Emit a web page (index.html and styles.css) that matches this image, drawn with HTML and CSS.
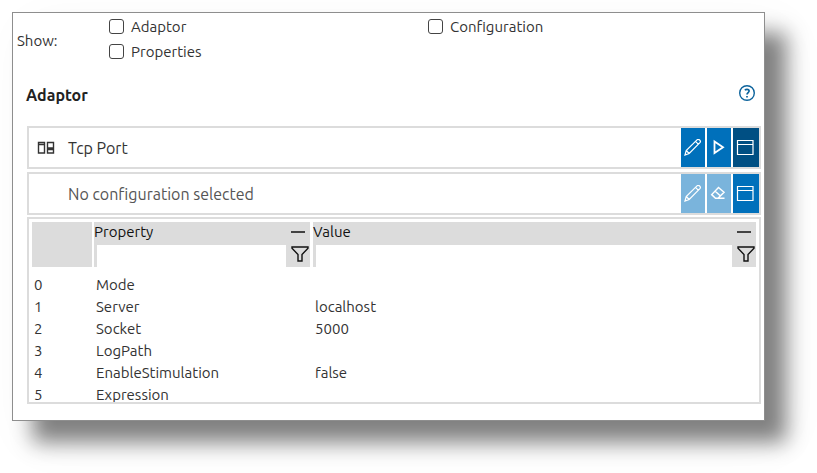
FILE: index.html
```html
<!DOCTYPE html>
<html lang="en">
<head>
<meta charset="utf-8">
<title>Adaptor</title>
<link rel="stylesheet" href="styles.css">
</head>
<body>
<main class="panel">
  <div class="show" role="group" aria-labelledby="show-title">
    <span class="show-title" id="show-title">Show:</span>
    <div class="options">
      <label class="option"><input type="checkbox">Adaptor</label>
      <label class="option"><input type="checkbox">Configuration</label>
      <label class="option"><input type="checkbox">Properties</label>
    </div>
  </div>

  <header class="heading">
    <h1>Adaptor</h1>
    <button class="help" type="button" aria-label="Help">
      <svg width="18" height="18" viewBox="0 0 18 18"><circle cx="9" cy="9" r="7.3"/><path class="q" d="M6.9 6.3C7.5 5.6 8.2 5.4 9 5.4c1.300 0 2.100.7 2.100 1.700 0 1.500-2.100 1.600-2.100 3.500M9 12v1.600"/></svg>
    </button>
  </header>

  <section class="content">
    <div class="item">
      <svg class="item-icon" width="18" height="14" viewBox="0 0 18 14"><path d="M1.500 1.500h6v10.500h-6zM1.500 3.500h6M10.500 1.500h6v10.500h-6zM10.500 7h6M10.500 8.500h6"/></svg>
      <span class="item-name">Tcp Port</span>
      <div class="actions">
        <button type="button" aria-label="Edit adaptor"><svg width="18" height="18" viewBox="0 0 18 18"><path d="M1 16l1.200-4.500L13 .9q1.200-1.200 2.600.1 1.500 1.400.3 2.700L5.200 14.500zM2.200 11.500l3 3M11.500 2.400l3 3"/></svg></button>
        <button type="button" aria-label="Run adaptor"><svg width="18" height="18" viewBox="0 0 18 18"><path class="bold" d="M4.500 2.500v11.500l8.500-5.700z"/></svg></button>
        <button class="wide pressed" type="button" aria-label="Browse adaptors"><svg width="18" height="18" viewBox="0 0 18 18"><path d="M1.500 1.500h15.500v14h-15.500zM1.500 5.500h15.500"/></svg></button>
      </div>
    </div>

    <div class="item empty">
      <span class="item-icon"></span>
      <span class="item-name">No configuration selected</span>
      <div class="actions">
        <button type="button" disabled aria-label="Edit configuration"><svg width="18" height="18" viewBox="0 0 18 18"><path d="M1 16l1.200-4.500L13 .9q1.200-1.200 2.600.1 1.500 1.400.3 2.700L5.200 14.500zM2.200 11.500l3 3M11.500 2.400l3 3"/></svg></button>
        <button type="button" disabled aria-label="Clear configuration"><svg width="18" height="18" viewBox="0 0 18 18"><path class="medium" d="M8.500 2.500l5.500 4.700-6 6h-2.500l-3.800-3.600zM5 6l5.500 5M8 13.200h6.500"/></svg></button>
        <button class="wide" type="button" aria-label="Browse configurations"><svg width="18" height="18" viewBox="0 0 18 18"><path d="M1.500 1.500h15.500v14h-15.500zM1.500 5.500h15.500"/></svg></button>
      </div>
    </div>

    <div class="properties">
      <table>
        <colgroup><col class="col-index"><col class="col-name"><col></colgroup>
        <thead>
          <tr>
            <th><div class="corner"></div></th>
            <th>
              <div class="head"><span>Property</span><button type="button" aria-label="Collapse Property"><svg width="14" height="14" viewBox="0 0 14 14"><path d="M0 7h14"/></svg></button></div>
              <div class="filter"><input type="text" aria-label="Filter Property"><button type="button" aria-label="Apply Property filter"><svg width="18" height="18" viewBox="0 0 18 18"><path d="M1 2h16v1.200l-6 6.300v6.500h-4v-6.500l-6-6.300z"/></svg></button></div>
            </th>
            <th>
              <div class="head"><span>Value</span><button type="button" aria-label="Collapse Value"><svg width="14" height="14" viewBox="0 0 14 14"><path d="M0 7h14"/></svg></button></div>
              <div class="filter"><input type="text" aria-label="Filter Value"><button type="button" aria-label="Apply Value filter"><svg width="18" height="18" viewBox="0 0 18 18"><path d="M1 2h16v1.200l-6 6.300v6.500h-4v-6.500l-6-6.300z"/></svg></button></div>
            </th>
          </tr>
        </thead>
        <tbody>
          <tr><td>0</td><td>Mode</td><td></td></tr>
          <tr><td>1</td><td>Server</td><td>localhost</td></tr>
          <tr><td>2</td><td>Socket</td><td>5000</td></tr>
          <tr><td>3</td><td>LogPath</td><td></td></tr>
          <tr><td>4</td><td>EnableStimulation</td><td>false</td></tr>
          <tr><td>5</td><td>Expression</td><td></td></tr>
        </tbody>
      </table>
    </div>
  </section>
</main>
</body>
</html>
```
FILE: styles.css
```css
* { box-sizing: border-box; }

body {
  margin: 0;
  padding: 12px 52px 52px 12px;
  background: #fff;
  color: #333;
  font: 15px/22px Ubuntu, "Noto Sans", sans-serif;
}

button, input { font: inherit; margin: 0; }
button { border: 0; padding: 0; background: none; color: inherit; }
svg { display: block; fill: none; stroke: currentColor; stroke-width: 1; }

.panel {
  border: 1px solid #8e8e8e;
  background: #fff;
  box-shadow: 21px 21px 20px #808080, 18px 18px 48px rgba(0, 0, 0, .06);
}

.show {
  display: flex;
  align-items: center;
  padding: 1px 4px 0;
}
.show-title { width: 92px; padding-top: 3px; }
.options {
  flex: 1;
  display: grid;
  grid-template-columns: 49% 1fr;
  grid-auto-rows: 25px;
}
.option { display: flex; align-items: center; gap: 7px; }
.option input {
  appearance: none;
  width: 15px;
  height: 15px;
  border: 1px solid #444;
  border-radius: 3px;
  background: #fff;
}

.heading {
  display: flex;
  align-items: flex-start;
  justify-content: space-between;
  padding: 18px 8px 18px 13px;
}
h1 { margin: 0; font-size: 16px; line-height: 26px; color: #222; }
.help { padding-top: 2px; color: #0c639c; }
.help svg { stroke-width: 1.4; }
.help .q { stroke-width: 1.7; }

.content { padding: 0 3px 16px 14px; }

.item {
  display: flex;
  align-items: center;
  height: 43px;
  margin-bottom: 3px;
  border: 2px solid #dcdcdc;
  font-size: 16px;
}
.item-icon { width: 18px; margin: 0 13px 0 8px; stroke-width: 1.4; }
.item-name { flex: 1; }
.item.empty { margin-bottom: 2px; color: #555; }
.actions { display: flex; gap: 2px; align-self: stretch; }
.actions button {
  display: grid;
  place-items: center;
  width: 24px;
  background: #0070bb;
  color: #fff;
}
.actions .wide { width: 26px; padding-right: 3px; }
.actions .pressed { background: #004f83; }
.actions button:disabled { background: #7ab4dc; }
.actions svg { stroke-width: 1.2; }
.bold { stroke-width: 1.8; }
.medium { stroke-width: 1.5; }

.properties {
  height: 187px;
  border: 2px solid #dcdcdc;
  padding: 3px;
  overflow: hidden;
}
table { width: 100%; border-collapse: collapse; table-layout: fixed; }
.col-index { width: 62px; }
.col-name { width: 219px; }
th { padding: 0 0 7px; font-weight: 400; text-align: left; color: #111; }
th:first-child { padding-right: 2px; }
th:nth-child(2) { padding-right: 3px; }
.corner { height: 45px; background: #dcdcdc; }
.head {
  display: flex;
  justify-content: space-between;
  height: 23px;
  padding-right: 5px;
  background: #dcdcdc;
  line-height: 20px;
}
.head svg { stroke-width: 1.5; }
.head button { display: grid; place-items: center; height: 20px; }
.filter { display: flex; height: 22px; border-left: 3px solid #dcdcdc; }
.filter input { flex: 1; min-width: 0; border: 0; padding: 0 2px; background: #fff; }
.filter button {
  display: grid;
  place-items: center;
  width: 24px;
  padding: 0 0 4px 4px;
  background: #dcdcdc;
}
.filter svg { stroke-width: 1.4; }
td { height: 22px; padding: 0 2px; }
```
